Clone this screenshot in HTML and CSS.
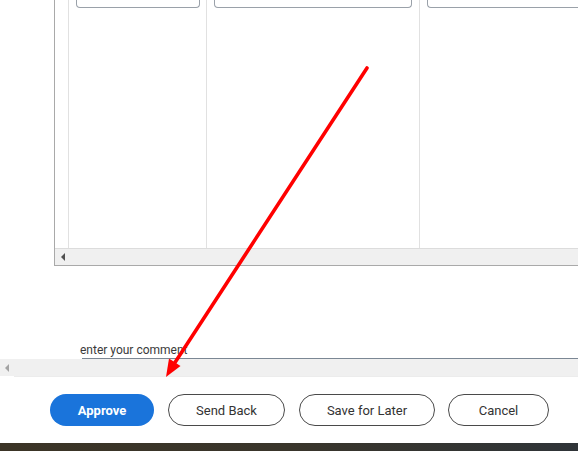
FILE: index.html
```html
<!DOCTYPE html>
<html>
<head>
<meta charset="utf-8">
<link rel="stylesheet" href="styles.css">
</head>
<body>
<div class="page">
  <div class="grid-wrap">
    <div class="grid-body">
      <div class="col col-a"></div>
      <div class="col col-b"><div class="field"></div></div>
      <div class="col col-c"><div class="field"></div></div>
      <div class="col col-d"><div class="field field-open"></div></div>
    </div>
    <div class="hscroll"><span class="scroll-arrow"></span></div>
  </div>

  <div class="comment">
    <div class="comment-text">enter your comment</div>
    <div class="comment-line"></div>
  </div>
  <div class="hscroll2"><span class="scroll-arrow light"></span></div>
  <div class="divider"></div>

  <div class="actions">
    <button class="btn primary approve">Approve</button>
    <button class="btn outline send">Send Back</button>
    <button class="btn outline save">Save for Later</button>
    <button class="btn outline cancel">Cancel</button>
  </div>

  <div class="taskbar"></div>

  <svg class="annotation" width="578" height="451" viewBox="0 0 578 451">
    <line x1="367" y1="68" x2="174" y2="364" stroke="#ff0000" stroke-width="3.6" stroke-linecap="round"/>
    <polygon points="166,377 169,358.5 180.5,366" fill="#ff0000"/>
  </svg>
</div>
</body>
</html>
```
FILE: styles.css
```css
html, body {
  margin: 0;
  padding: 0;
  background: #ffffff;
}
body {
  width: 578px;
  height: 451px;
  overflow: hidden;
  font-family: Roboto, "Liberation Sans", Arial, sans-serif;
}
.page {
  position: relative;
  width: 578px;
  height: 451px;
  overflow: hidden;
  display: flex;
  flex-direction: column;
}
.grid-wrap {
  margin-left: 54px;
  border-left: 1px solid #a9a9a9;
  border-bottom: 1px solid #a9a9a9;
  display: flex;
  flex-direction: column;
}
.grid-body {
  height: 248px;
  display: flex;
}
.col {
  border-right: 1px solid #e1e1e1;
  box-sizing: border-box;
}
.col-a { width: 14px; }
.col-b { width: 138px; padding: 0 6px 0 7px; }
.col-c { width: 213px; padding: 0 7px 0 7px; }
.col-d { flex: 1; min-width: 0; padding: 0 0 0 7px; border-right: none; }
.field {
  height: 7px;
  border: 1px solid #9aa1a9;
  border-top: none;
  border-radius: 0 0 4px 4px;
}
.field-open {
  border-right: none;
  border-radius: 0 0 0 4px;
}
.hscroll {
  height: 16px;
  background: #f0f0f0;
  border-top: 1px solid #dcdcdc;
  display: flex;
  align-items: center;
  padding-left: 6px;
}
.scroll-arrow {
  width: 0;
  height: 0;
  border-top: 4px solid transparent;
  border-bottom: 4px solid transparent;
  border-right: 4px solid #505050;
}
.scroll-arrow.light {
  border-right-color: #a3a3a3;
}
.comment {
  margin-top: 77px;
  display: flex;
  flex-direction: column;
}
.comment-text {
  margin-left: 80px;
  font-size: 12px;
  line-height: 14px;
  color: #3a3a3a;
  height: 15px;
  white-space: nowrap;
}
.comment-line {
  margin-left: 82px;
  height: 0;
  border-top: 1px solid #7b8794;
}
.hscroll2 {
  height: 17px;
  background: #f0f0f0;
  display: flex;
  align-items: center;
  padding-left: 5px;
}
.divider {
  margin-left: 14px;
  height: 1px;
  background: #ececec;
}
.actions {
  margin-top: 17px;
  padding-left: 50px;
  display: flex;
  gap: 14px;
  height: 32px;
}
.btn {
  height: 32px;
  border-radius: 16px;
  font-family: Roboto, "Liberation Sans", Arial, sans-serif;
  font-size: 13px;
  padding: 0;
  box-sizing: border-box;
  cursor: pointer;
}
.primary {
  background: #1a74db;
  color: #ffffff;
  border: none;
  font-weight: 700;
}
.outline {
  background: #ffffff;
  color: #333333;
  border: 1px solid #4a4a4a;
}
.approve { width: 104px; }
.send { width: 117px; }
.save { width: 136px; }
.cancel { width: 101px; margin-left: -1px; }
.taskbar {
  margin-top: auto;
  height: 8px;
  background: linear-gradient(90deg, #3b3426 0%, #39352b 50%, #2f3438 100%);
}
.annotation {
  position: absolute;
  left: 0;
  top: 0;
  pointer-events: none;
}
```
